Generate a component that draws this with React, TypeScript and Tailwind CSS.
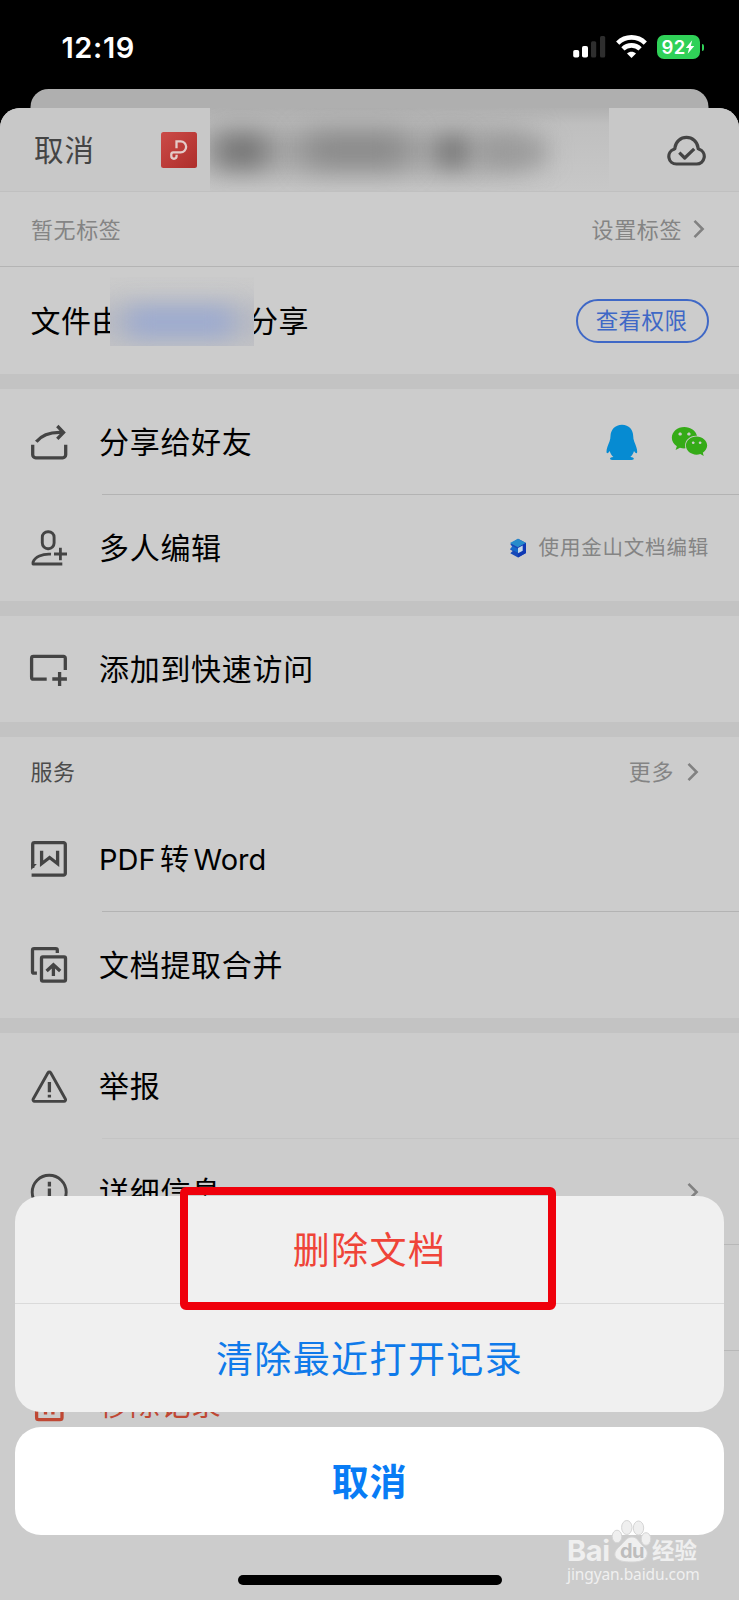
import type { ReactNode } from "react";
import { FaWeixin } from "react-icons/fa";

interface IconProps {
  children: ReactNode;
  color?: string;
}

function LineIcon({ children, color = "#444444" }: IconProps) {
  return (
    <svg
      className="shrink-0"
      width="40"
      height="40"
      viewBox="0 0 40 40"
      fill="none"
      stroke={color}
      strokeWidth="3.3"
      strokeLinejoin="round"
    >
      {children}
    </svg>
  );
}

function ShareIcon() {
  return (
    <LineIcon>
      <path d="M3.7 22.8v10a3 3 0 0 0 3 3h27a3 3 0 0 0 3-3v-10" />
      <path d="M7.3 19.8C13 12.5 21 9.6 34 10.4M28.3 4l6.2 6.4-6.2 6.4" strokeLinejoin="miter" />
    </LineIcon>
  );
}

function AddUserIcon() {
  return (
    <LineIcon>
      <rect x="13.3" y="3.7" width="11.8" height="17" rx="5.6" strokeWidth="2.9" />
      <path d="M22 26.2C13 25.6 6 29 4 34.2V36h29.3" strokeWidth="2.8" />
      <path d="M25 26h13M31.4 19.8v12.4" strokeWidth="2.8" />
    </LineIcon>
  );
}

function AddBoxIcon() {
  return (
    <LineIcon>
      <path d="M17.7 30.2H4.4a1.8 1.8 0 0 1-1.8-1.8V9.2a1.8 1.8 0 0 1 1.8-1.8h30.1a1.8 1.8 0 0 1 1.8 1.8V21" />
      <path d="M23.3 30h14.6M30.6 23v13.9" />
    </LineIcon>
  );
}

function WordIcon() {
  return (
    <LineIcon>
      <path d="M3.7 29V5.4a1.8 1.8 0 0 1 1.8-1.8h29a1.8 1.8 0 0 1 1.8 1.8v29a1.8 1.8 0 0 1-1.8 1.8H2.6" />
      <path d="M12.6 11.8v12.9l8-6.2 8 6.2V11.8" strokeLinejoin="miter" />
      <path d="M2.1 31V25h5.7z" fill="#444444" stroke="none" />
    </LineIcon>
  );
}

function ExtractIcon() {
  return (
    <LineIcon>
      <path d="M7.9 28.2H5a1.5 1.5 0 0 1-1.5-1.5V5.2a1.6 1.6 0 0 1 1.6-1.6h21.6a1.6 1.6 0 0 1 1.6 1.6v2.7" />
      <rect x="12.5" y="11.8" width="24" height="24.4" rx="1.4" />
      <path d="M24.4 31V19.9M17.6 26l6.8-6.3 6.8 6.3" strokeLinejoin="miter" />
    </LineIcon>
  );
}

function WarningIcon() {
  return (
    <LineIcon>
      <path d="M19 6.8a1.6 1.6 0 0 1 2.7 0L36.4 33a1.6 1.6 0 0 1-1.4 2.4H5.6A1.6 1.6 0 0 1 4.2 33z" strokeWidth="2.9" />
      <path d="M20.4 16v10.3M20.4 28.7v2.8" />
    </LineIcon>
  );
}

function InfoIcon() {
  return (
    <LineIcon>
      <circle cx="20.2" cy="20.3" r="17" strokeWidth="2.9" />
      <path d="M20.4 9.8v4.6M20.4 16.5v13" />
    </LineIcon>
  );
}

function TrashIcon() {
  return (
    <LineIcon color="#bf4733">
      <path d="M7.6 10v23.5a2.2 2.2 0 0 0 2.2 2.2h21a2.2 2.2 0 0 0 2.2-2.2V10M3 9.5h34M16.5 15v15.5M23.9 15v15.5" />
    </LineIcon>
  );
}

function Chevron() {
  return (
    <svg width="12" height="20" viewBox="0 0 12 20" fill="none" stroke="#818181" strokeWidth="2.6">
      <path d="M1.5 1.8 9.6 10l-8.1 8.2" />
    </svg>
  );
}

function QqIcon() {
  return (
    <svg className="mt-px" width="32" height="37" viewBox="0 0 32 37" fill="#068bd2">
      <path d="M16 .7C9 .7 4.7 5.7 4.500 12c0 2-.3 3.800-1 5.600C2 21.500.4 25 .5 28c.2 2 1.500 1.600 3.200-1 .7 2.500 1.800 4.400 3.700 6-2.600.4-3.800 1.200-3.300 2.100.4.700 1.500 1 3.200 1h17.300c1.700 0 2.800-.3 3.200-1 .5-.9-.9-1.700-3.500-2.100 1.900-1.600 3-3.500 3.700-6 1.700 2.600 3 3 3.200 1 .1-3-1.500-6.500-3-10.400-.7-1.800-1-3.600-1-5.600C27.200 5.700 23 .7 16 .7z" />
    </svg>
  );
}

function DocsLogo() {
  return (
    <svg width="18" height="20" viewBox="0 0 18 20">
      <path d="M9 .8 17 5v10l-8 4.400L1.300 15.300l2.400-2.300-2.600-1.400 2.500-2.300L1.300 6z" fill="#1749b8" />
      <path d="M9 .8 17 5 9 9.200 1 5z" fill="#278ccb" />
      <path d="m3.600 8 5.400 3v3.800L1.100 11z" fill="#1769c9" />
      <path d="m9 9.200 8-4.200v10l-8 4.400z" fill="#1039b4" />
      <path d="m9 10 4.700-2.400v5.200L9 15.200z" fill="#c5d8e8" />
    </svg>
  );
}

function StatusBar() {
  return (
    <div className="flex h-[89px] items-center justify-between pr-[35px] pl-[61.5px]">
      <span className="mt-[5px] font-['Inter'] text-[29px] leading-none font-semibold tracking-[0.6px] text-white">12:19</span>
      <div className="mt-[5px] flex items-center">
        <svg width="33" height="24" viewBox="0 0 33 24">
          <rect x=".2" y="15" width="6" height="7.5" rx="1.8" fill="#fff" />
          <rect x="9" y="11" width="6" height="11.5" rx="1.8" fill="#fff" />
          <rect x="18" y="6.2" width="5.2" height="16.3" rx="1.5" fill="#2e2e2e" />
          <rect x="27" y="1" width="5.2" height="21.5" rx="1.5" fill="#2e2e2e" />
        </svg>
        <svg className="ml-[10px]" width="31" height="24" viewBox="0 0 31 24" fill="none" stroke="#fff" strokeWidth="4.6">
          <path d="M1.7 8.1C9.5.5 21.5.5 29.3 8.1" />
          <path d="M6.9 13.9c4.900-4.700 12.300-4.700 17.200 0" />
          <path d="M15.5 22.9 11 18.600c2.500-2.400 6.500-2.400 9 0z" fill="#fff" stroke="none" />
        </svg>
        <div className="ml-[10px] flex h-6 w-[43px] items-center justify-center rounded-[7px] bg-[#30d158]">
          <span className="font-['Inter'] text-[18.5px] leading-none font-semibold tracking-[0.3px] text-white">92</span>
          <svg width="10" height="14" viewBox="0 0 9 14" fill="#fff">
            <path d="M6.700.3.3 8.100h3.300L2.200 13.700 8.800 5.900H5.300z" />
          </svg>
        </div>
        <div className="ml-[2px] h-[7px] w-[2px] rounded-r-full bg-[#30d158]" />
      </div>
    </div>
  );
}

function SheetHeader() {
  return (
    <div className="flex h-[84px] items-center border-b border-[#c0c0c0] bg-[#c8c8c8] pr-[33px]">
      <span className="w-[126px] pt-[2px] pl-[34px] text-[29.5px] tracking-[1px] text-[#444444]">取消</span>
      <svg className="ml-[35px] shrink-0" width="36" height="36" viewBox="0 0 36 36" fill="none">
        <defs>
          <linearGradient id="pdf" x1="0" y1="0" x2="1" y2="1">
            <stop offset="0" stopColor="#cb4b48" />
            <stop offset="1" stopColor="#ae2d2a" />
          </linearGradient>
        </defs>
        <rect width="36" height="36" rx="2.5" fill="url(#pdf)" />
        <path
          d="M15.5 16.2V9.4h4.200a5.400 5.400 0 0 1 0 10.900h-7.400a2.200 2.200 0 0 0-2 2.300v1.500a2.600 2.600 0 0 0 5.300 0v-1.300"
          stroke="#e4cbc9"
          strokeWidth="2.3"
        />
      </svg>
      {/* obscured file name */}
      <div className="relative ml-[13px] h-[83px] w-[399px] overflow-hidden bg-linear-to-b from-[#b1b1b1] via-[#bfbfbf] via-20% to-[#c8c8c8]">
        <div className="absolute top-[20px] -left-[10px] h-[44px] w-[330px] bg-[#a4a4a4] blur-[14px]" />
        <div className="absolute top-[28px] left-[8px] h-[30px] w-[48px] bg-[#707070] blur-[13px]" />
        <div className="absolute top-[28px] left-[96px] h-[28px] w-[100px] bg-[#828282] blur-[15px]" />
        <div className="absolute top-[30px] left-[228px] h-[28px] w-[28px] bg-[#707070] blur-[12px]" />
        <div className="absolute top-[33px] left-[274px] h-[22px] w-[62px] bg-[#969696] blur-[12px]" />
      </div>
      <svg className="ml-auto" width="39" height="32" viewBox="0 0 39 32" fill="none" stroke="#444444" strokeWidth="3.2" strokeLinejoin="round">
        <path d="M9.500 30h20.200a7.600 7.600 0 0 0 2.400-14.800A1.500 1.500 0 0 1 31 13.500a11.600 11.600 0 0 0-23 0 1.500 1.500 0 0 1-1 1.700A7.600 7.600 0 0 0 9.500 30z" />
        <path d="m12.300 18.600 5.400 5.400 9.500-9.200" />
      </svg>
    </div>
  );
}

interface RowProps {
  icon?: ReactNode;
  label: ReactNode;
  right?: ReactNode;
  danger?: boolean;
  line?: "none" | "solid" | "faint" | "full";
}

const lineColor = {
  none: "bg-transparent",
  solid: "bg-[#b3b3b3]",
  faint: "bg-[#c4c4c4]",
  full: "bg-[#b8b8b8]",
};

function Row({ icon, label, right, danger, line = "none" }: RowProps) {
  return (
    <div className="h-[106px]">
      <div className="flex h-[105px] items-center pr-[30px] pl-[29px]">
        {icon}
        <span className={`ml-[30px] pt-[2px] text-[30px] tracking-[0.7px] whitespace-nowrap ${danger ? "text-[#bf4733]" : "text-black"}`}>
          {label}
        </span>
        <div className="ml-auto flex items-center">{right}</div>
      </div>
      <div className={`ml-[102px] h-px ${lineColor[line]}`} />
    </div>
  );
}

function Gap() {
  return <div className="h-[15px] bg-[#c3c3c3]" />;
}

function Watermark() {
  return (
    <div className="absolute top-[1519px] left-[567px] w-[140px]">
      <svg width="134" height="46" viewBox="0 0 134 46">
        <g fill="#efefef" stroke="#d5d5d5" strokeWidth="1">
          <ellipse cx="50" cy="17.5" rx="4.8" ry="6.3" />
          <ellipse cx="59.8" cy="8.5" rx="5.2" ry="7" />
          <ellipse cx="71.5" cy="9" rx="5.2" ry="7" />
          <ellipse cx="79" cy="20" rx="4.8" ry="6.3" />
          <path d="M65 18c5 0 6 4 10 8 3 3 6 5 5 10-1 5-6 7-15 7s-15-1-17-6c-1-5 3-8 6-11 4-4 6-8 11-8z" />
        </g>
      </svg>
      <div className="-mt-[28px] flex h-[27px] items-center text-[#efefef]">
        <span className="w-[48px] font-['Inter'] text-[29px] leading-[27px] font-bold tracking-[-0.4px]">Bai</span>
        <span className="w-[37px] pl-[5px] font-['Inter'] text-[20px] leading-[22px] font-bold tracking-[-0.5px] text-[#bdbdbd]">du</span>
        <span className="text-[22.5px] leading-[24px] font-bold">经验</span>
      </div>
      <div className="font-['Noto_Sans'] text-[15.5px] leading-[20px] tracking-[-0.1px] text-[#f0f0f0]">
        jingyan.baidu.com
      </div>
    </div>
  );
}

export default function App() {
  return (
    <div className="relative h-[1600px] w-[739px] overflow-hidden bg-black font-['Inter','Noto_Sans_CJK_SC',sans-serif]">
      <StatusBar />
      <div className="mx-auto h-[19px] w-[678px] -translate-x-[0.5px] rounded-t-[18px] bg-[#afafaf]" />

      <div className="h-[1492px] overflow-hidden rounded-t-[20px] bg-[#cccccc]">
        <SheetHeader />

        <div className="flex h-[75px] items-center border-b border-[#b4b4b4] pr-[34px] pl-[31px] text-[22px] tracking-[0.6px] text-[#848484]">
          <span className="pt-[2px]">暂无标签</span>
          <span className="mr-[11px] ml-auto pt-[2px]">设置标签</span>
          <Chevron />
        </div>

        <div className="flex h-[107px] items-center pr-[30px] pl-[30.5px] text-[30px] tracking-[0.5px] text-black">
          <span className="w-[91px] pt-[1px] whitespace-nowrap">文件由</span>
          <div className="relative z-10 -ml-[11.5px] h-[69px] w-[144px] -translate-y-[9px] overflow-hidden bg-linear-to-b from-[#cbcbcb] to-[#c6c6c6]">
            <div className="absolute top-[26px] -left-[10px] h-[38px] w-[164px] bg-[#b5b8c2] blur-[12px]" />
            <div className="absolute top-[32px] left-[18px] h-[26px] w-[104px] bg-[#98a8d2] blur-[12px]" />
          </div>
          <span className="-ml-[6px] pt-[1px]">分享</span>
          <span className="ml-auto flex h-11 w-[133px] items-center justify-center rounded-full border-2 border-[#3f68c6] pt-px pr-[2px] text-[22.5px] tracking-[0.4px] text-[#3f68c6]">
            查看权限
          </span>
        </div>
        <Gap />

        <Row
          icon={<ShareIcon />}
          label="分享给好友"
          line="solid"
          right={
            <>
              <QqIcon />
              <FaWeixin className="mr-px ml-[33px]" size={37} color="#35ab17" />
            </>
          }
        />
        <Row
          icon={<AddUserIcon />}
          label="多人编辑"
          right={
            <>
              <DocsLogo />
              <span className="ml-[12px] pt-[2px] text-[20.5px] tracking-[0.8px] text-[#848484]">使用金山文档编辑</span>
            </>
          }
        />
        <Gap />

        <Row icon={<AddBoxIcon />} label="添加到快速访问" />
        <Gap />

        <div className="flex h-[69px] items-center pr-[40px] pl-[30.5px] text-[22px] tracking-[0.6px]">
          <span className="pt-[2px] text-[#4b4b4b]">服务</span>
          <span className="mr-[13px] ml-auto pt-[2px] text-[#848484]">更多</span>
          <Chevron />
        </div>
        <Row
          icon={<WordIcon />}
          label={
            <span className="text-[29px] tracking-[0px]">
              PDF<span className="mx-[4.5px]">转</span>Word
            </span>
          }
          line="solid"
        />
        <Row icon={<ExtractIcon />} label="文档提取合并" />
        <Gap />

        <Row icon={<WarningIcon />} label="举报" line="faint" />
        <Row icon={<InfoIcon />} label="详细信息" line="full" right={<div className="pr-[10px]"><Chevron /></div>} />
        <Row label="" line="full" />
        <Row icon={<TrashIcon />} label="移除记录" danger />
      </div>

      {/* action sheet */}
      <div className="absolute inset-x-[15px] bottom-[65px] flex flex-col gap-[15px] text-center">
        <div className="overflow-hidden rounded-[26px] bg-[#f0f0f0] text-[37px] tracking-[1.4px]">
          <div className="flex h-[108px] items-center justify-center border-b border-[#dadada] pt-[3px] text-[#ef4438]">删除文档</div>
          <div className="flex h-[108px] items-center justify-center pt-[3px] text-[#0f7aea]">清除最近打开记录</div>
        </div>
        <div className="flex h-[108px] items-center justify-center rounded-[26px] bg-white pt-[4px] text-[37px] font-bold tracking-[0.8px] text-[#087cf5]">
          取消
        </div>
      </div>

      <div className="absolute top-[1187px] left-[180px] h-[123px] w-[376px] rounded-[6px] border-8 border-[#ef000b]" />
      <div className="absolute top-[1575px] left-[238px] h-[10px] w-[264px] rounded-full bg-black" />
      <Watermark />
    </div>
  );
}
